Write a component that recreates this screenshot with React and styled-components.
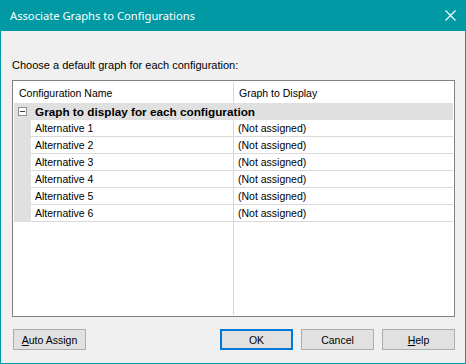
import React from "react";
import styled, { createGlobalStyle } from "styled-components";

const Global = createGlobalStyle`
  html, body { margin: 0; padding: 0; background: #f0f0f0; }
  body { font-family: "Liberation Sans", Arial, sans-serif; }
`;

const Window = styled.div`
  width: 466px;
  height: 364px;
  box-sizing: border-box;
  border: 1px solid #0099a4;
  border-top: none;
  background: #f0f0f0;
  display: flex;
  flex-direction: column;
`;

const TitleBar = styled.div`
  height: 31px;
  flex: none;
  background: #0099a4;
  color: #fff;
  display: flex;
  align-items: center;
  justify-content: space-between;
  padding: 0 9px 0 9px;
  font-family: "Noto Sans", "Open Sans", sans-serif;
  font-size: 11.2px;
`;

const Title = styled.span`
  padding-bottom: 1px;
`;

const CloseBtn = styled.svg`
  width: 11px;
  height: 11px;
  margin-top: -1px;
`;

const Content = styled.div`
  flex: 1;
  display: flex;
  flex-direction: column;
  padding: 28px 10px 0 11px;
  font-size: 11px;
  color: #000;
`;

const Label = styled.div`
  height: 13px;
  line-height: 13px;
  margin-bottom: 8px;
`;

const Grid = styled.div`
  width: 443px;
  height: 237px;
  box-sizing: border-box;
  border: 1px solid #828282;
  background: #fff;
  padding: 1px;
  display: flex;
  flex-direction: column;
  font-size: 10.5px;
`;

const Row = styled.div`
  display: grid;
  grid-template-columns: ${(p) => (p.$gutter ? "17px 202px 1fr" : "219px 1fr")};
  height: ${(p) => p.$h}px;
  flex: ${(p) => (p.$fill ? "1" : "none")};
`;

const Gutter = styled.div`
  background: #e0e0e0;
`;

const Cell = styled.div`
  display: flex;
  align-items: center;
  padding-left: ${(p) => p.$pl ?? 4}px;
  border-bottom: ${(p) => (p.$line ? "1px solid #d9d9d9" : "none")};
  border-left: ${(p) => (p.$divider ? "1px solid #d9d9d9" : "none")};
  white-space: nowrap;
  overflow: hidden;
`;

const GroupRow = styled.div`
  height: 17px;
  flex: none;
  background: #e0e0e0;
  display: flex;
  align-items: center;
  font-weight: bold;
  font-size: 11.75px;
`;

const Expander = styled.div`
  width: 9px;
  height: 9px;
  box-sizing: border-box;
  border: 1px solid #909090;
  background: #fff;
  margin: 0 8px 0 4px;
  position: relative;
  &::after {
    content: "";
    position: absolute;
    left: 1px;
    right: 1px;
    top: 3px;
    height: 1px;
    background: #404040;
  }
`;

const ButtonBar = styled.div`
  display: flex;
  align-items: center;
  margin-top: 12px;
  gap: 8px;
`;

const Button = styled.button`
  width: 73px;
  height: 21px;
  box-sizing: border-box;
  margin: 0;
  padding: 0;
  border: ${(p) => (p.$default ? "2px solid #0078d7" : "1px solid #adadad")};
  background: #e1e1e1;
  font-family: "Liberation Sans", Arial, sans-serif;
  font-size: 10.5px;
  color: #000;
  display: flex;
  align-items: center;
  justify-content: center;
  &:first-child { margin-left: 1px; }
`;

const Spacer = styled.div`
  flex: 1;
`;

const U = styled.span`
  text-decoration: underline;
`;

const rows = [1, 2, 3, 4, 5, 6];

export default function App() {
  return (
    <>
      <Global />
      <Window>
        <TitleBar>
          <Title>Associate Graphs to Configurations</Title>
          <CloseBtn viewBox="0 0 11 11">
            <path d="M0.5 0.5 L10.5 10.5 M10.5 0.5 L0.5 10.5" stroke="#fff" strokeWidth="1.1" />
          </CloseBtn>
        </TitleBar>
        <Content>
          <Label>Choose a default graph for each configuration:</Label>
          <Grid>
            <Row $h={21}>
              <Cell $pl={5}>Configuration Name</Cell>
              <Cell $divider $pl={5}>Graph to Display</Cell>
            </Row>
            <GroupRow>
              <Expander />
              Graph to display for each configuration
            </GroupRow>
            {rows.map((n) => (
              <Row key={n} $gutter $h={17}>
                <Gutter />
                <Cell $line $pl={4}>Alternative {n}</Cell>
                <Cell $line $divider $pl={4}>(Not assigned)</Cell>
              </Row>
            ))}
            <Row $fill>
              <Cell />
              <Cell $divider />
            </Row>
          </Grid>
          <ButtonBar>
            <Button>
              <U>A</U>uto Assign
            </Button>
            <Spacer />
            <Button $default>OK</Button>
            <Button>Cancel</Button>
            <Button>
              <U>H</U>elp
            </Button>
          </ButtonBar>
        </Content>
      </Window>
    </>
  );
}
